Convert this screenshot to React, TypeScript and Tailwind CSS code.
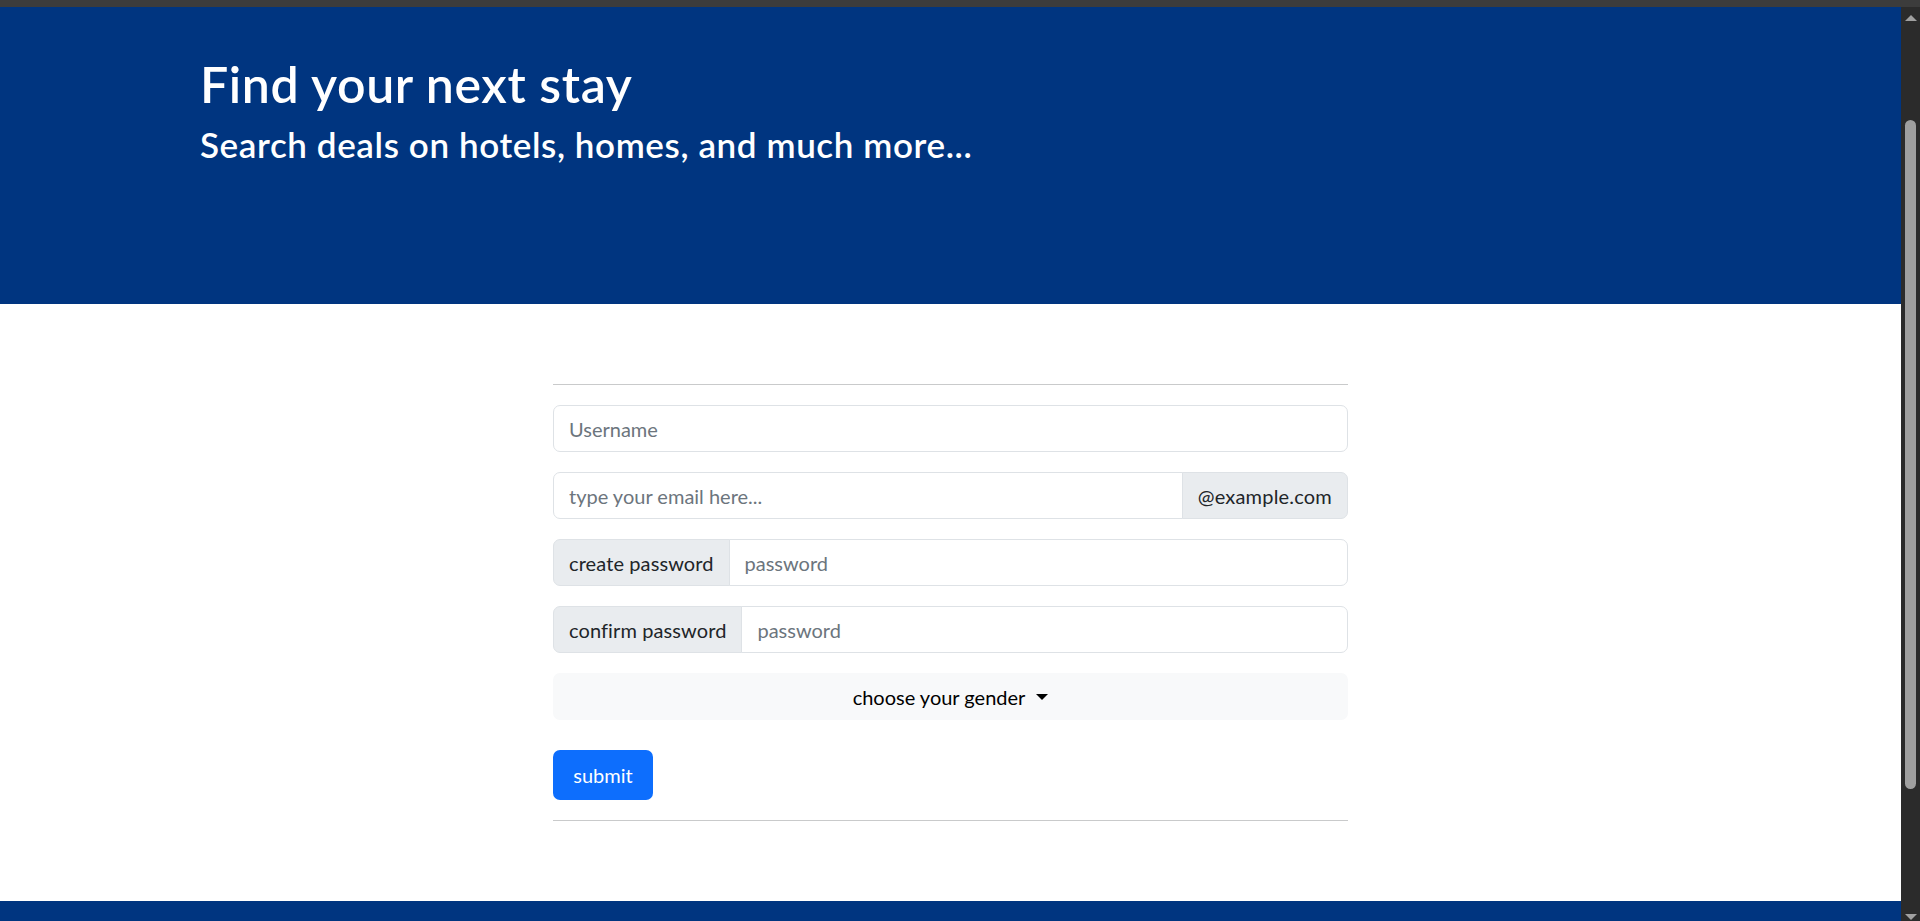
import React from 'react';

const font = { fontFamily: 'Lato, "Liberation Sans", sans-serif' };

function InputGroupText({ children, side }: { children: React.ReactNode; side: 'left' | 'right' }) {
  return (
    <span
      className={
        side === 'left'
          ? 'flex items-center px-[15px] bg-[#e9ecef] border border-[#dee2e6] rounded-l-[7px] text-[#212529] text-[20px] leading-[30px] tracking-[0.1px] whitespace-nowrap'
          : 'flex items-center px-[15px] bg-[#e9ecef] border border-[#dee2e6] -ml-px rounded-r-[7px] text-[#212529] text-[20px] leading-[30px] tracking-[0.2px] whitespace-nowrap'
      }
    >
      {children}
    </span>
  );
}

export default function App() {
  return (
    <div className="h-[921px] overflow-hidden flex flex-col bg-white" style={font}>
      <div className="h-[7px] shrink-0 bg-[#3c3c3c]" />
      <div className="flex flex-1 min-h-0">
        <main className="flex-1 min-w-0 flex flex-col">
          <header className="h-[297px] shrink-0 bg-[#003580] pl-[200px] pt-[47px] text-white">
            <h1 className="text-[50px] leading-[60px] font-semibold tracking-[0.6px] mb-[9px]">Find your next stay</h1>
            <h3 className="text-[35px] leading-[42px] font-semibold tracking-[0.6px]">
              Search deals on hotels, homes, and much more...
            </h3>
          </header>

          <section className="h-[597px] shrink-0 pt-[80px]">
            <form className="w-[795px] mx-auto flex flex-col" onSubmit={(e) => e.preventDefault()}>
              <hr className="border-t border-[#c9cacb] mb-[20px]" />

              <input
                type="text"
                placeholder="Username"
                className="h-[47px] px-[15px] border border-[#dee2e6] rounded-[7px] text-[20px] leading-[30px] text-[#212529] placeholder:text-[#6c757d] outline-none mb-[20px]"
              />

              <div className="flex h-[47px] mb-[20px]">
                <input
                  type="email"
                  placeholder="type your email here..."
                  className="flex-1 min-w-0 px-[15px] border border-[#dee2e6] rounded-l-[7px] text-[20px] leading-[30px] text-[#212529] placeholder:text-[#6c757d] outline-none"
                />
                <InputGroupText side="right">@example.com</InputGroupText>
              </div>

              <div className="flex h-[47px] mb-[20px]">
                <InputGroupText side="left">create password</InputGroupText>
                <input
                  type="password"
                  placeholder="password"
                  className="flex-1 min-w-0 -ml-px px-[15px] border border-[#dee2e6] rounded-r-[7px] text-[20px] leading-[30px] text-[#212529] placeholder:text-[#6c757d] outline-none"
                />
              </div>

              <div className="flex h-[47px] mb-[20px]">
                <InputGroupText side="left">confirm password</InputGroupText>
                <input
                  type="password"
                  placeholder="password"
                  className="flex-1 min-w-0 -ml-px px-[15px] border border-[#dee2e6] rounded-r-[7px] text-[20px] leading-[30px] text-[#212529] placeholder:text-[#6c757d] outline-none"
                />
              </div>

              <button
                type="button"
                className="h-[47px] flex items-center justify-center bg-[#f8f9fa] rounded-[7px] text-[20px] leading-[30px] text-black mb-[30px]"
              >
                choose your gender
                <span className="ml-[11px] w-0 h-0 border-t-[6px] border-t-black border-x-[6px] border-x-transparent" />
              </button>

              <button
                type="submit"
                className="self-start w-[100px] h-[50px] bg-[#0d6efd] rounded-[7px] text-white text-[20px] leading-[30px] mb-[20px]"
              >
                submit
              </button>

              <hr className="border-t border-[#c9cacb]" />
            </form>
          </section>

          <footer className="flex-1 bg-[#003580]" />
        </main>

        {/* window scrollbar */}
        <div className="w-[19px] shrink-0 bg-[#2b2b2b] flex flex-col items-center">
          <div className="mt-[8px] w-0 h-0 border-b-[6px] border-b-[#a0a0a0] border-x-[6px] border-x-transparent" />
          <div className="mt-[99px] w-[11px] h-[669px] rounded-full bg-[#9f9f9f]" />
          <div className="mt-auto mb-[1px] w-0 h-0 border-t-[6px] border-t-[#a0a0a0] border-x-[6px] border-x-transparent" />
        </div>
      </div>
    </div>
  );
}
